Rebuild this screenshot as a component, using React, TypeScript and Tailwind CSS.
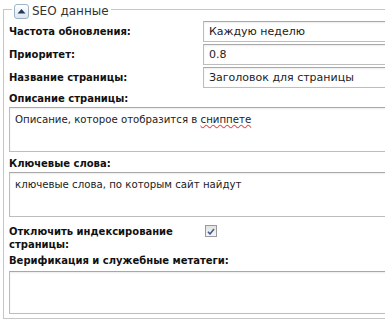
import React from 'react';

const inputCls =
  'h-[21px] w-[200px] border border-[#bdbdbd] border-t-[#a8a8a8] bg-white px-[5px] text-[11px] leading-[19px] text-[#222] shadow-[inset_0_1px_2px_rgba(0,0,0,0.08)]';
const areaCls =
  'w-[400px] border border-[#bdbdbd] border-t-[#a8a8a8] bg-white px-[5px] py-[4px] text-[10.2px] leading-[16px] text-[#222] shadow-[inset_0_1px_2px_rgba(0,0,0,0.08)]';
const labelCls = 'text-[10px] font-bold leading-[14px] text-[#111]';

function Row({ label, value }: { label: string; value: string }) {
  return (
    <div className="flex items-center">
      <div className={'w-[194px] ' + labelCls}>{label}</div>
      <div className={inputCls}>{value}</div>
    </div>
  );
}

export default function App() {
  return (
    <div className="h-[323px] w-[385px] overflow-hidden bg-white font-['DejaVu_Sans',Tahoma,sans-serif]">
      <div className="relative ml-[3px] mt-[9px] h-[310px] w-[450px] border border-[#c6c6c6] pl-[5px] pt-[11px]">
        {/* legend */}
        <div className="absolute left-[8px] top-[-8px] flex items-center gap-[3px] bg-white px-[2px]">
          <div className="flex h-[15px] w-[15px] items-center justify-center rounded-[3px] border border-[#9fb3c8] bg-gradient-to-b from-white to-[#dde6ef]">
            <svg width="9" height="6" viewBox="0 0 9 6">
              <path d="M0.5 5.5 L4.5 1 L8.5 5.5 Z" fill="#1f3b5c" />
            </svg>
          </div>
          <span className="text-[12px] text-[#333]">SEO данные</span>
        </div>

        <div className="flex flex-col gap-[2px]">
          <Row label="Частота обновления:" value="Каждую неделю" />
          <Row label="Приоритет:" value="0.8" />
          <Row label="Название страницы:" value="Заголовок для страницы" />
        </div>

        <div className={'mt-[4px] ' + labelCls}>Описание страницы:</div>
        <div className={areaCls + ' mt-[1px] h-[45px]'}>
          Описание, которое отобразится в{' '}
          <span className="underline decoration-[#e05050] decoration-wavy">сниппете</span>
        </div>

        <div className={'mt-[5px] ' + labelCls}>Ключевые слова:</div>
        <div className={areaCls + ' mt-[1px] h-[45px]'}>ключевые слова, по которым сайт найдут</div>

        <div className="mt-[8px] flex items-start">
          <div className="w-[194px] text-[10px] font-bold leading-[13px] text-[#111]">
            Отключить индексирование
            <br />
            страницы:
          </div>
          <div className="ml-[2px] flex h-[12px] w-[12px] items-center justify-center border border-[#9a9a9a] bg-gradient-to-b from-[#e2e2e2] to-[#f6f6f6]">
            <svg width="8" height="7" viewBox="0 0 8 7">
              <path d="M1 3.8 L3 6 L7 1" fill="none" stroke="#3b5a96" strokeWidth="1.5" />
            </svg>
          </div>
        </div>

        <div className={'mt-[3px] ' + labelCls}>Верификация и служебные метатеги:</div>
        <div className={areaCls + ' mt-[3px] h-[43px]'}></div>
      </div>
    </div>
  );
}
